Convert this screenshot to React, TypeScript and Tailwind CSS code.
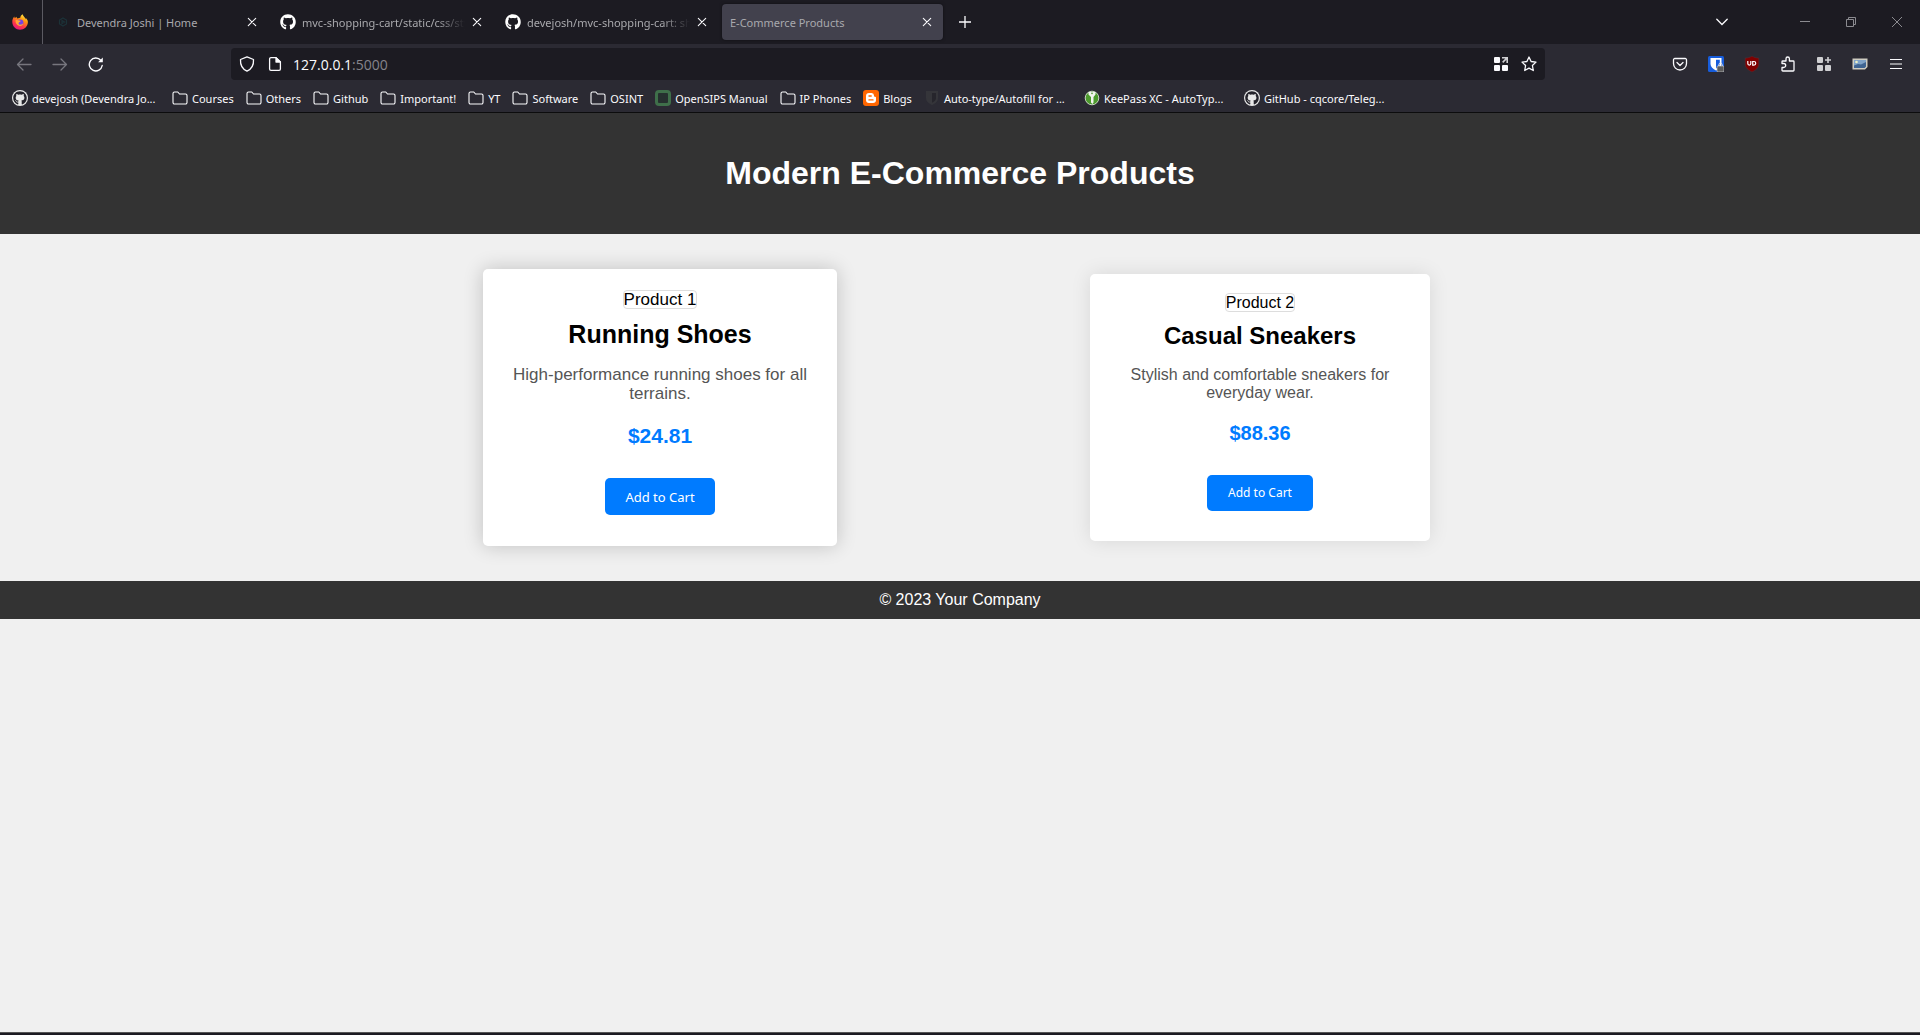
import type { ReactNode } from "react";
import { FaGithub } from "react-icons/fa";

function CloseIcon() {
  return (
    <svg className="size-[10px]" viewBox="0 0 10 10" fill="none" stroke="#fbfbfe" strokeWidth="1.100" strokeLinecap="round">
      <path d="M1.300 1.300l7.400 7.400M8.700 1.300l-7.400 7.400" />
    </svg>
  );
}

function FirefoxLogo() {
  return (
    <svg className="size-4" viewBox="0 0 16 16">
      <defs>
        <linearGradient id="flame" x1="0.8" y1="0" x2="0.3" y2="1">
          <stop offset="0" stopColor="#fff44f" />
          <stop offset="0.35" stopColor="#ff980e" />
          <stop offset="0.7" stopColor="#ff3647" />
          <stop offset="1" stopColor="#e31587" />
        </linearGradient>
      </defs>
      <path
        fill="url(#flame)"
        d="M15.6 6.4c-.4-1-1.200-1.900-1.900-2.200.3.600.4 1 .5 1.500C13.200 3.200 11.300 2.400 10.600.200c-1.500.900-2.200 2.200-2.300 3.500-1 .1-1.800.4-2.500.9-.9-.400-1.300-1.400-1.300-1.900-.7.300-1.300.900-1.700 1.500-.3-.300-.4-1.300-.3-1.700C1 3.700.100 6 .300 8.300c.2 4.200 3.600 7.500 7.700 7.500s7.700-3.100 7.900-7.500c0-.7-.1-1.300-.3-1.900z"
      />
      <circle cx="8.200" cy="8.600" r="3.200" fill="#7542e5" />
      <path fill="#ffa436" d="M3.500 6.200c1.300-.6 2.800-.3 4 .4 1 .1 1.100.4 1 .8-.2.500-1.700.6-1.900 1.500-.2 1.200.9 2 2.300 1.700 1.300-.3 1.300-.9 2.300-.9-.7 2-2.700 2.700-4.400 2.100C4.700 11 3.300 8.900 3.500 6.200z" />
    </svg>
  );
}

function GithubBadge() {
  return (
    <span className="flex size-4 items-center justify-center rounded-full bg-[#e8e8e8]">
      <FaGithub className="size-[14px] text-[#24232b]" />
    </span>
  );
}

function FolderIcon() {
  return (
    <svg className="size-4" viewBox="0 0 16 16" fill="none" stroke="#fbfbfe" strokeWidth="1.100" strokeLinejoin="round">
      <path d="M1 3.500a1.500 1.500 0 0 1 1.500-1.500h3.300l1.700 2h6a1.500 1.500 0 0 1 1.500 1.500v7a1.500 1.500 0 0 1-1.500 1.500h-11A1.500 1.500 0 0 1 1 12.500z" />
    </svg>
  );
}

function OpenSipsIcon() {
  return <span className="block size-4 rounded-[4px] border-[3px] border-[#3f6f4a] bg-[#26302f]" />;
}

function BloggerIcon() {
  return (
    <svg className="size-4" viewBox="0 0 16 16">
      <rect width="16" height="16" rx="3" fill="#ff6600" />
      <path
        fill="#fff"
        fillRule="evenodd"
        d="M6 3h2.600A2.500 2.500 0 0 1 11 5.500c0 1 .3 1.300 1.100 1.300.6 0 .9.300.9.900V10a3 3 0 0 1-3 3H6a3 3 0 0 1-3-3V6a3 3 0 0 1 3-3zm0 2.300a.7.700 0 0 0 0 1.400h2.200a.7.700 0 0 0 0-1.400zm0 3.900a.7.700 0 0 0 0 1.400h4a.7.700 0 0 0 0-1.400z"
      />
    </svg>
  );
}

function ShieldDarkIcon() {
  return (
    <svg className="size-4" viewBox="0 0 16 16">
      <path d="M2 1h12v7c0 3.500-3 5.700-6 7-3-1.300-6-3.500-6-7z" fill="#35353a" />
      <path d="M8 3h4v5c0 2-1.700 3.600-4 4.700z" fill="#26252c" />
    </svg>
  );
}

function KeePassIcon() {
  return (
    <svg className="size-4" viewBox="0 0 16 16">
      <circle cx="8" cy="8" r="6.800" fill="#4c9a2d" stroke="#c9d6c2" strokeWidth="1" />
      <path fill="#f2f5ef" d="M4.500 1.900h7v2.500L9.500 7v5.500L8.500 14 7 12.500V7L4.500 4.400z" />
      <circle cx="8" cy="3.400" r=".8" fill="#4c9a2d" />
    </svg>
  );
}

type TabProps = { title: string; icon?: ReactNode; active?: boolean; faded?: boolean };

function Tab({ title, icon, active, faded }: TabProps) {
  return (
    <div
      className={
        active
          ? "flex h-9 w-[221px] items-center rounded bg-[#42414d] px-2 shadow-[0_0_3px_rgba(0,0,0,0.5)]"
          : "flex h-9 w-[221px] items-center rounded px-2"
      }
    >
      {icon && <span className="mr-[6px] flex shrink-0">{icon}</span>}
      <button
        className={
          faded
            ? "flex-1 overflow-hidden pt-px text-left whitespace-nowrap text-[#a9a9ad] [mask-image:linear-gradient(to_left,transparent_4px,black_32px)]"
            : "flex-1 overflow-hidden pt-px text-left whitespace-nowrap text-[#a9a9ad]"
        }
      >
        {title}
      </button>
      <button aria-label={"Close " + title} className="flex w-4 shrink-0 items-center justify-center">
        <CloseIcon />
      </button>
    </div>
  );
}

const bookmarks: { label: string; icon: ReactNode }[] = [
  { label: "devejosh (Devendra Jo...", icon: <GithubBadge /> },
  { label: "Courses", icon: <FolderIcon /> },
  { label: "Others", icon: <FolderIcon /> },
  { label: "Github", icon: <FolderIcon /> },
  { label: "Important!", icon: <FolderIcon /> },
  { label: "YT", icon: <FolderIcon /> },
  { label: "Software", icon: <FolderIcon /> },
  { label: "OSINT", icon: <FolderIcon /> },
  { label: "OpenSIPS Manual", icon: <OpenSipsIcon /> },
  { label: "IP Phones", icon: <FolderIcon /> },
  { label: "Blogs", icon: <BloggerIcon /> },
  { label: "Auto-type/Autofill for ...", icon: <ShieldDarkIcon /> },
  { label: "KeePass XC - AutoTyp...", icon: <KeePassIcon /> },
  { label: "GitHub - cqcore/Teleg...", icon: <GithubBadge /> },
];

function ToolButton({ label, children }: { label: string; children: ReactNode }) {
  return (
    <button aria-label={label} className="flex h-8 w-9 items-center justify-center">
      {children}
    </button>
  );
}

function TabStrip() {
  return (
    <div className="flex h-11 items-center bg-[#1c1b22]">
      <button aria-label="Firefox View" className="flex h-11 w-[43px] items-center border-r border-[#5b5a62] pl-3">
        <FirefoxLogo />
      </button>
      <div className="ml-1 flex h-11 items-center gap-1">
        <Tab
          title="Devendra Joshi | Home"
          icon={
            <svg className="size-4" viewBox="0 0 16 16" fill="none" stroke="#1c3238" strokeWidth="1.200">
              <path d="M8 4l3.500 2v4L8 12l-3.500-2V6zM7 6.500v3l2.500-1.500z" />
            </svg>
          }
        />
        <Tab title="mvc-shopping-cart/static/css/styles.css" icon={<FaGithub className="size-4 text-white" />} faded />
        <Tab title="devejosh/mvc-shopping-cart: shopping" icon={<FaGithub className="size-4 text-white" />} faded />
        <Tab title="E-Commerce Products" active />
      </div>
      <button aria-label="New tab" className="ml-1 flex size-9 items-center justify-center">
        <svg className="size-3" viewBox="0 0 12 12" stroke="#fbfbfe" strokeWidth="1.300">
          <path d="M6 0v12M0 6h12" />
        </svg>
      </button>
      <div className="ml-auto flex items-center">
        <button aria-label="List all tabs" className="mr-[42px] flex size-9 items-center justify-center">
          <svg className="h-2 w-3" viewBox="0 0 12 8" fill="none" stroke="#fbfbfe" strokeWidth="1.300" strokeLinecap="round">
            <path d="M.8 1.200L6 6.500l5.200-5.300" />
          </svg>
        </button>
        <button aria-label="Minimize" className="flex h-11 w-[46px] items-center justify-center">
          <svg className="size-[10px]" viewBox="0 0 10 10" stroke="#8b8b90" fill="none">
            <path d="M0 4.500h10" />
          </svg>
        </button>
        <button aria-label="Restore" className="flex h-11 w-[46px] items-center justify-center">
          <svg className="size-[10px]" viewBox="0 0 10 10" stroke="#8b8b90" fill="none">
            <path d="M.5 2.500h7v7h-7zM2.500 2.500v-2h7v7h-2" />
          </svg>
        </button>
        <button aria-label="Close window" className="flex h-11 w-[46px] items-center justify-center">
          <svg className="size-[10px]" viewBox="0 0 10 10" stroke="#8b8b90" fill="none">
            <path d="M0 0l10 10M10 0L0 10" />
          </svg>
        </button>
      </div>
    </div>
  );
}

function Toolbar() {
  return (
    <div className="flex h-9 items-end bg-[#2b2a33]">
      <div className="ml-[6px] flex">
        <ToolButton label="Back">
          <svg className="size-4" viewBox="0 0 16 16" fill="none" stroke="#77767e" strokeWidth="1.300" strokeLinecap="round" strokeLinejoin="round">
            <path d="M15 8.500H1.500M7 3L1.500 8.500 7 14" />
          </svg>
        </ToolButton>
        <ToolButton label="Forward">
          <svg className="size-4" viewBox="0 0 16 16" fill="none" stroke="#77767e" strokeWidth="1.300" strokeLinecap="round" strokeLinejoin="round">
            <path d="M1 8.500h13.500M9 3l5.500 5.500L9 14" />
          </svg>
        </ToolButton>
        <ToolButton label="Reload">
          <svg className="size-4" viewBox="0 0 16 16" fill="none" stroke="#fbfbfe" strokeWidth="1.400" strokeLinecap="round">
            <path d="M14.200 9.500A6.500 6.500 0 1 1 12.800 4.300" />
            <path d="M14.800 1.500v4.700h-4.700z" fill="#fbfbfe" stroke="none" />
          </svg>
        </ToolButton>
      </div>
      <div className="ml-[117px] flex h-8 flex-1 items-center rounded bg-[#1c1b22] pr-0.5 pl-2 text-[#fbfbfe]">
        <svg className="size-4" viewBox="0 0 16 16" fill="none" stroke="currentColor" strokeWidth="1.300" strokeLinejoin="round">
          <path d="M8 .8l6.500 2.700c.3 4.700-1.600 9.400-6.500 11.700C3.100 12.900 1.200 8.200 1.500 3.500z" />
        </svg>
        <svg className="ml-3 size-4" viewBox="0 0 16 16" fill="none" stroke="currentColor" strokeWidth="1.300" strokeLinejoin="round">
          <path d="M9 1.600H4A1.400 1.400 0 0 0 2.600 3v10A1.400 1.400 0 0 0 4 14.400h8a1.400 1.400 0 0 0 1.400-1.400V6z" />
          <path d="M9 1.600V6h4.400z" fill="currentColor" />
        </svg>
        <div className="ml-[10px] flex-1 pt-0.5 font-['Open_Sans',sans-serif] text-sm leading-5 whitespace-nowrap">
          127.0.0.1<span className="text-[#85848b]">:5000</span>
        </div>
        <button aria-label="Open apps" className="flex w-7 justify-center">
          <svg className="size-[14px]" viewBox="0 0 14 14" fill="#fbfbfe">
            <rect width="6" height="6" rx="1" />
            <rect y="8" width="6" height="6" rx="1" />
            <rect x="8" y="8" width="6" height="6" rx="1" />
            <path d="M8 0h6v6h-1.600V2.700L9.200 5.900 8.100 4.800l3.200-3.200H8z" fill="#cfcfd2" />
          </svg>
        </button>
        <button aria-label="Bookmark this page" className="flex w-7 justify-center">
          <svg className="size-4" viewBox="0 0 16 16" fill="none" stroke="currentColor" strokeWidth="1.300" strokeLinejoin="round">
            <path d="M8 1l2.100 4.500 4.900.600-3.600 3.400.9 5L8 12.100l-4.300 2.400.9-5L1 6.100l4.900-.6z" />
          </svg>
        </button>
      </div>
      <div className="mr-[6px] ml-[117px] flex">
        <ToolButton label="Save to Pocket">
          <svg className="size-4" viewBox="0 0 16 16" fill="none" stroke="#fbfbfe" strokeWidth="1.300" strokeLinecap="round" strokeLinejoin="round">
            <path d="M2.800 2.500h10.400a1.300 1.300 0 0 1 1.300 1.300V7.500a6.500 6.500 0 0 1-13 0V3.800a1.300 1.300 0 0 1 1.300-1.300z" />
            <path d="M5 6.500l3 3 3-3" />
          </svg>
        </ToolButton>
        <ToolButton label="Bitwarden">
          <svg className="size-4" viewBox="0 0 16 16">
            <rect width="16" height="16" rx="1.500" fill="#175ddc" />
            <path d="M2.500 2h11v6c0 3-2.500 5-5.500 6.500C5 13 2.500 11 2.500 8z" fill="#fff" />
            <path d="M8 3.800h3.800V8c0 1.800-1.500 3.200-3.800 4.500z" fill="#175ddc" />
            <rect x="9" y="10" width="7" height="6" rx="1" fill="#5c5c5c" stroke="#d8d8d8" strokeWidth=".6" />
            <path d="M10.800 10V8.800a1.700 1.700 0 0 1 3.400 0V10" fill="none" stroke="#e2e2e2" />
          </svg>
        </ToolButton>
        <ToolButton label="uBlock Origin">
          <svg className="size-4" viewBox="0 0 16 16">
            <path d="M8 0c2 1.500 4 2 6.800 2v6c0 4-3.300 6.300-6.800 8-3.500-1.700-6.800-4-6.800-8V2C4 2 6 1.500 8 0z" fill="#800000" stroke="#55333a" strokeWidth=".5" />
            <path d="M3.800 5v2.600a1.500 1.500 0 0 0 3 0V5M8.700 5.500v3.700h1.200a1.800 1.800 0 0 0 0-3.700z" fill="none" stroke="#fff" strokeWidth="1.200" />
          </svg>
        </ToolButton>
        <ToolButton label="Extensions">
          <svg className="size-4" viewBox="0 0 16 16" fill="none" stroke="#fbfbfe" strokeWidth="1.300" strokeLinejoin="round">
            <path d="M2 7.500V5.800a.8.800 0 0 1 .8-.8H6V2.700a1.700 1.700 0 0 1 3.400 0V5h3.800a.8.800 0 0 1 .8.800v8.400a.8.800 0 0 1-.8.800H2.800a.8.800 0 0 1-.8-.8V11.500h1.700a1.900 1.900 0 0 0 0-4z" />
          </svg>
        </ToolButton>
        <ToolButton label="Manage apps">
          <svg className="size-[14px]" viewBox="0 0 14 14" fill="#cfcfd2">
            <rect width="6" height="6" rx="1" />
            <rect y="8" width="6" height="6" rx="1" />
            <rect x="8" y="8" width="6" height="6" rx="1" />
            <path d="M10.200 0h1.600v2.200H14v1.600h-2.200V6h-1.600V3.800H8V2.200h2.200z" />
          </svg>
        </ToolButton>
        <ToolButton label="Image viewer">
          <svg className="size-4" viewBox="0 0 16 16">
            <path d="M.5 2.500h15v8.500l-2.500 2.500H.5z" fill="#cfccc2" />
            <path d="M2 4h12v6.500L12.500 12H2z" fill="#7fa3c9" />
            <path d="M2 9.500l4-1.500 3 .5L14 6v4.500L12.500 12H2z" fill="#3f6492" />
            <circle cx="4.500" cy="6" r="1.300" fill="#eef0c4" />
          </svg>
        </ToolButton>
        <ToolButton label="Application menu">
          <svg className="size-3" viewBox="0 0 12 12" stroke="#fbfbfe" strokeWidth="1.200">
            <path d="M0 1.500h12M0 6h12M0 10.500h12" />
          </svg>
        </ToolButton>
      </div>
    </div>
  );
}

function BookmarksBar() {
  return (
    <nav className="flex h-[33px] items-center gap-3 border-b border-[#0c0c0d] bg-[#2b2a33] pt-1 pl-3 text-[#fbfbfe]">
      {bookmarks.map((b) => (
        <a key={b.label} href="#" className="flex shrink-0 items-center gap-1 whitespace-nowrap">
          {b.icon}
          <span className={b.label.endsWith("...") ? "w-32 pt-px" : "pt-px"}>{b.label}</span>
        </a>
      ))}
    </nav>
  );
}

export default function App() {
  return (
    <div className="flex min-h-screen flex-col bg-[#f0f0f0] font-['Liberation_Sans',Arial,sans-serif] text-base leading-[18px] text-black">
      <div className="font-['Noto_Sans',sans-serif] text-[11px] leading-4">
        <TabStrip />
        <Toolbar />
        <BookmarksBar />
      </div>

      <header className="bg-[#333] py-[42px] text-center text-white">
        <h1 className="text-[32px] leading-[37px] font-bold">Modern E-Commerce Products</h1>
      </header>

      <main className="mx-auto grid w-full max-w-[1200px] grid-cols-2 items-center justify-items-center py-[35px] text-center">
        <article className="w-[354px] rounded-[5px] bg-white px-[21px] pt-[21px] pb-[31px] shadow-[0_0_20px_rgba(0,0,0,0.2)]">
          <span className="inline-block rounded-[4px] border border-[#ddd] text-[17px] leading-[17px]">Product 1</span>
          <h2 className="mt-[11px] text-[25px] leading-7 font-bold">Running Shoes</h2>
          <p className="mt-[17px] text-[17px] leading-[19px] text-[#555]">High-performance running shoes for all terrains.</p>
          <p className="mt-[21px] text-[21px] leading-6 font-bold text-[#007bff]">$24.81</p>
          <button className="mt-[30px] h-[37px] rounded-[5px] bg-[#007bff] px-5 font-['Noto_Sans',sans-serif] text-[13px] text-white">
            Add to Cart
          </button>
        </article>

        <article className="w-[340px] rounded-[5px] bg-white px-5 pt-[19px] pb-[30px] shadow-[0_0_20px_rgba(0,0,0,0.1)]">
          <span className="inline-block rounded-[4px] border border-[#ddd] leading-[17px]">Product 2</span>
          <h2 className="mt-[10px] text-2xl leading-7 font-bold">Casual Sneakers</h2>
          <p className="mt-4 leading-[18px] text-[#555]">Stylish and comfortable sneakers for everyday wear.</p>
          <p className="mt-[19px] text-xl leading-6 font-bold text-[#007bff]">$88.36</p>
          <button className="mt-[30px] h-9 rounded-[5px] bg-[#007bff] px-[21px] font-['Noto_Sans',sans-serif] text-xs text-white">
            Add to Cart
          </button>
        </article>
      </main>

      <footer className="bg-[#333] py-[10px] text-center text-white">© 2023 Your Company</footer>

      <div className="mt-auto h-[3px] border-t border-[#555] bg-[#1c1b22]" />
    </div>
  );
}
